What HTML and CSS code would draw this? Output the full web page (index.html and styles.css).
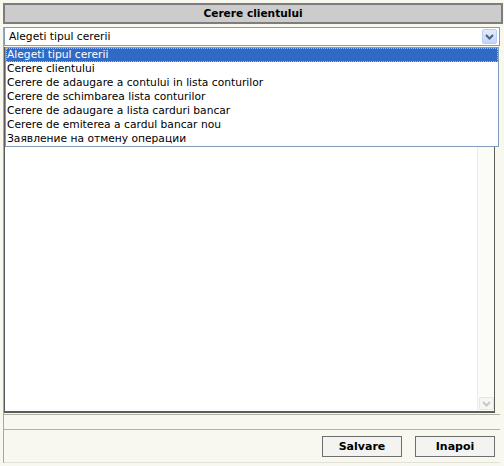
FILE: index.html
```html
<!DOCTYPE html>
<html>
<head>
<meta charset="utf-8">
<link rel="stylesheet" href="styles.css">
</head>
<body>
<div class="page">
  <div class="title">Cerere clientului</div>
  <div class="form">
    <div class="select-wrap">
      <div class="select">
        <span class="select-text">Alegeti tipul cererii</span>
        <span class="select-btn">
          <svg width="9" height="6" viewBox="0 0 9 6"><polyline points="1,1 4.5,4.5 8,1" fill="none" stroke="#4d6185" stroke-width="2"/></svg>
        </span>
      </div>
      <ul class="options">
        <li class="opt selected">Alegeti tipul cererii</li>
        <li class="opt">Cerere clientului</li>
        <li class="opt">Cerere de adaugare a contului in lista conturilor</li>
        <li class="opt">Cerere de schimbarea lista conturilor</li>
        <li class="opt">Cerere de adaugare a lista carduri bancar</li>
        <li class="opt">Cerere de emiterea a cardul bancar nou</li>
        <li class="opt">Заявление на отмену операции</li>
      </ul>
    </div>
    <div class="textarea">
      <div class="ta-body"></div>
      <div class="scrollbar">
        <span class="sb-down">
          <svg width="9" height="6" viewBox="0 0 9 6"><polyline points="1,1 4.5,4.5 8,1" fill="none" stroke="#c9c9c4" stroke-width="2"/></svg>
        </span>
      </div>
    </div>
    <div class="spacer-row"></div>
    <div class="actions">
      <button class="btn">Salvare</button>
      <button class="btn">Inapoi</button>
    </div>
  </div>
</div>
</body>
</html>
```

FILE: styles.css
```css
html, body {
  margin: 0;
  padding: 0;
}
body {
  background: #f8f8ee;
  font-family: "DejaVu Sans", Verdana, sans-serif;
  color: #000;
  width: 504px;
  height: 466px;
  overflow: hidden;
}
.page {
  padding: 3px 1px 0 3px;
}
.title {
  height: 17px;
  line-height: 17px;
  border: 2px solid #7d7d7d;
  background: #cccccc;
  text-align: center;
  font-weight: bold;
  font-size: 10.6px;
}
.form {
  margin-top: 3px;
  margin-right: 3px;
  border-left: 1px solid #aaa89e;
  display: flex;
  flex-direction: column;
}
.select-wrap {
  position: relative;
  z-index: 2;
}
.select {
  height: 17px;
  border: 1px solid #7f9db9;
  background: #fff;
  display: flex;
  align-items: center;
  justify-content: space-between;
  padding: 0 2px 0 4px;
}
.select-text {
  font-size: 10.7px;
  line-height: 17px;
}
.select-btn {
  width: 13px;
  height: 13px;
  border: 1px solid #b8cdf4;
  border-radius: 2px;
  background: linear-gradient(#e3ecfd, #c3d5fb);
  display: flex;
  align-items: center;
  justify-content: center;
}
.options {
  position: absolute;
  top: 20px;
  left: 1px;
  right: 1px;
  height: 98px;
  margin: 0;
  padding: 0;
  list-style: none;
  background: #fff;
  border: 1px solid #7f9db9;
}
.opt {
  height: 14px;
  line-height: 14px;
  font-size: 10.7px;
  padding-left: 1px;
  white-space: nowrap;
}
.opt.selected {
  background: #316ac5;
  color: #fff;
  outline: 1px dotted #d9b873;
  outline-offset: -1px;
}
.textarea {
  margin-top: 1px;
  margin-right: 5px;
  height: 363px;
  border: 1px solid #5c5c5c;
  border-bottom-width: 2px;
  background: #fff;
  display: flex;
}
.ta-body {
  flex: 1;
}
.scrollbar {
  width: 16px;
  border-left: 1px solid #ecebe6;
  background: #fcfcf7;
  display: flex;
  flex-direction: column;
  justify-content: flex-end;
  align-items: center;
  padding-bottom: 1px;
}
.sb-down {
  width: 13px;
  height: 11px;
  border: 1px solid #e6e5df;
  border-radius: 2px;
  background: #f6f6f2;
  display: flex;
  align-items: center;
  justify-content: center;
}
.spacer-row {
  margin-top: 1px;
  height: 14px;
  border-top: 1px solid #b3b0a4;
  border-bottom: 1px solid #b3b0a4;
}
.actions {
  display: flex;
  justify-content: flex-end;
  gap: 13px;
  padding: 6px 5px 5px 0;
  border-bottom: 1px solid #e3e2d8;
}
.btn {
  width: 80px;
  height: 21px;
  margin: 0;
  padding: 0;
  border: 1px solid #6e6e6e;
  background: #f3f3f1;
  font-family: "DejaVu Sans", Verdana, sans-serif;
  font-weight: bold;
  font-size: 11px;
  color: #000;
}
```
